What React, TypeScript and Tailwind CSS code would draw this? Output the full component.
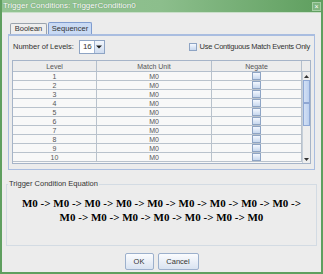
import React from 'react';

const levels = [1, 2, 3, 4, 5, 6, 7, 8, 9, 10];

const line1 = Array(9).fill('M0').join(' -> ') + ' ->';
const line2 = Array(7).fill('M0').join(' -> ');

const NegateBox = () => (
  <div className="w-[9px] h-[8px] border border-[#8ea4c4] bg-gradient-to-b from-[#f4f8ff] to-[#c8d8ee]" />
);

export default function App() {
  return (
    <div
      className="w-[323px] h-[274px] bg-[#5f9f5f] p-[2px] pt-0 flex flex-col text-[#333]"
      style={{ fontFamily: '"Liberation Sans", Arial, sans-serif' }}
    >
      {/* title bar */}
      <div className="h-[12px] flex items-center justify-between bg-gradient-to-r from-[#94c494] via-[#8cbe8c] to-[#5f9f5f] pl-[1px]">
        <span className="text-[8px] leading-none text-white [text-shadow:0_0_1px_#55805a]">
          Trigger Conditions: TriggerCondition0
        </span>
        <div className="w-[9px] h-[9px] border border-[#a6cfa6] bg-[#7fb57f] flex items-center justify-center text-white text-[7px] leading-none">
          ×
        </div>
      </div>

      {/* body */}
      <div className="flex-1 bg-[#ececec] border-t border-[#c9dfc9] flex flex-col pt-[10px]">
        {/* tabs */}
        <div className="flex items-end pl-[8px] h-[11px]">
          <div className="h-[11px] w-[37px] border border-b-0 border-[#9aa3ad] rounded-t-[2px] bg-[#eeeeee] text-[7.5px] leading-none flex items-center justify-center text-[#333]">
            Boolean
          </div>
          <div className="ml-[1px] h-[12px] w-[44px] border border-b-0 border-[#7f9ccf] rounded-t-[2px] bg-[#c9daf4] text-[7.5px] leading-none flex items-center justify-center text-[#333]">
            Sequencer
          </div>
        </div>

        {/* tab panel */}
        <div className="mx-[6px] h-[136px] border border-[#a9bde0] border-t-2 flex flex-col px-[3px]">
          <div className="h-[22px] flex items-center justify-between pl-[1px] pr-[1px]">
            <div className="flex items-center">
              <span className="text-[7.5px] leading-none">Number of Levels:</span>
              <div className="ml-[5px] h-[14px] w-[26px] border border-[#8ea4c4] bg-white flex">
                <div className="flex-1 text-[8px] flex items-center pl-[3px]">16</div>
                <div className="w-[10px] border-l border-[#9fb3d3] bg-gradient-to-b from-[#f3f7fd] to-[#cfdcef] flex items-center justify-center">
                  <svg width="6" height="4" viewBox="0 0 6 4">
                    <path d="M0 0.5 H6 L3 3.5 Z" fill="#222" />
                  </svg>
                </div>
              </div>
            </div>
            <div className="flex items-center">
              <div className="w-[8px] h-[8px] border border-[#8ea4c4] bg-gradient-to-b from-[#f4f8ff] to-[#c8d8ee]" />
              <span className="ml-[3px] text-[7.5px] leading-none tracking-[-0.25px]">Use Contiguous Match Events Only</span>
            </div>
          </div>

          {/* table */}
          <div className="mt-[2px] h-[104px] border border-[#a6b4c8] flex flex-col bg-[#f8f8f8]">
            <div className="h-[11px] flex border-b border-[#b4bfcc] bg-[#ececec] text-[7px] leading-none text-[#555]">
              <div className="w-[84px] border-r border-[#b4bfcc] flex items-center justify-center">Level</div>
              <div className="w-[115px] border-r border-[#b4bfcc] flex items-center justify-center">Match Unit</div>
              <div className="w-[90px] border-r border-[#b4bfcc] flex items-center justify-center">Negate</div>
              <div className="flex-1" />
            </div>
            <div className="flex-1 flex">
              <div className="flex flex-col">
                {levels.map((n) => (
                  <div key={n} className="h-[9px] flex border-b border-[#b9c2cc] text-[7px] leading-none text-[#555]">
                    <div className="w-[84px] border-r border-[#b9c2cc] flex items-center justify-center">{n}</div>
                    <div className="w-[115px] border-r border-[#b9c2cc] flex items-center justify-center">M0</div>
                    <div className="w-[90px] border-r border-[#b9c2cc] flex items-center justify-center">
                      <NegateBox />
                    </div>
                  </div>
                ))}
              </div>
              {/* scrollbar */}
              <div className="flex-1 flex flex-col bg-[#eeeeee] border-l border-[#c6cfd9]">
                <div className="h-[8px] flex items-center justify-center">
                  <svg width="5" height="3" viewBox="0 0 5 3">
                    <path d="M0 3 H5 L2.5 0 Z" fill="#333" />
                  </svg>
                </div>
                <div className="h-[46px] border border-[#8fa9d6] bg-gradient-to-r from-[#d3e0f4] to-[#bcd0ef] flex items-center justify-center">
                  <div className="w-[5px] h-[2px] bg-[#8ea6d3]" />
                </div>
                <div className="flex-1" />
                <div className="h-[8px] flex items-center justify-center">
                  <svg width="5" height="3" viewBox="0 0 5 3">
                    <path d="M0 0 H5 L2.5 3 Z" fill="#333" />
                  </svg>
                </div>
              </div>
            </div>
          </div>
        </div>

        {/* equation group */}
        <div className="relative mt-[14px] mx-[4px] h-[62px] border border-[#d3dbe3] flex flex-col items-center justify-center pb-[10px]">
          <span className="absolute -top-[5px] left-[1px] bg-[#ececec] px-[1px] text-[7.5px] leading-none text-[#333]">
            Trigger Condition Equation
          </span>
          <div
            className="text-[11px] font-bold leading-[14px] text-black text-center whitespace-pre"
            style={{ fontFamily: '"Liberation Serif", "Times New Roman", serif' }}
          >
            <div>{line1}</div>
            <div>{line2}</div>
          </div>
        </div>

        {/* buttons */}
        <div className="flex-1 flex items-center justify-center gap-[4px] pt-[5px]">
          <div className="w-[29px] h-[17px] border border-[#9cb0cc] rounded-[2px] bg-gradient-to-b from-[#fbfcfe] to-[#d9e3f1] text-[7.5px] flex items-center justify-center text-[#333]">
            OK
          </div>
          <div className="w-[41px] h-[17px] border border-[#9cb0cc] rounded-[2px] bg-gradient-to-b from-[#fbfcfe] to-[#d9e3f1] text-[7.5px] flex items-center justify-center text-[#333]">
            Cancel
          </div>
        </div>
      </div>
    </div>
  );
}
